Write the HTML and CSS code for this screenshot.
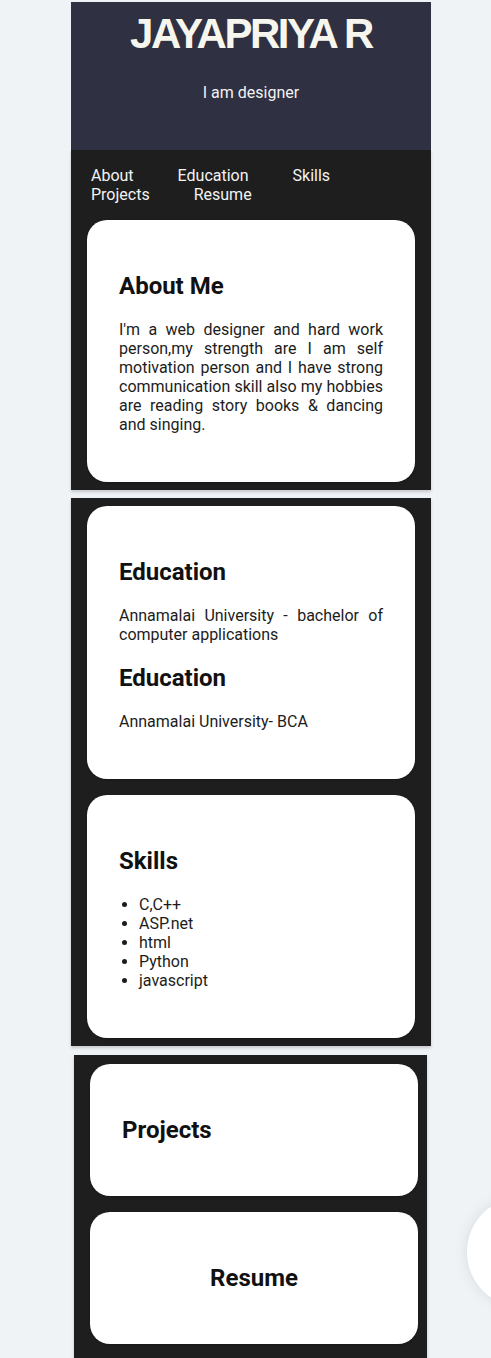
FILE: index.html
```html
<!DOCTYPE html>
<html lang="en">
<head>
<meta charset="utf-8">
<title>Jayapriya R</title>
<link rel="stylesheet" href="styles.css">
</head>
<body>
<div class="page">
  <header class="hero">
    <h1 class="hero-title">JAYAPRIYA R</h1>
    <p class="hero-sub">I am designer</p>
  </header>

  <section class="panel panel-first">
    <nav class="nav">
      <a href="#about">About</a>
      <a href="#education">Education</a>
      <a href="#skills">Skills</a>
      <a href="#projects">Projects</a>
      <a href="#resume">Resume</a>
    </nav>
    <article class="card" id="about">
      <h2 class="card-title">About Me</h2>
      <p class="card-text">I'm a web designer and hard work person,my strength are I am self motivation person and I have strong communication skill also my hobbies are reading story books &amp; dancing and singing.</p>
    </article>
  </section>

  <section class="panel">
    <article class="card" id="education">
      <h2 class="card-title">Education</h2>
      <p class="card-text">Annamalai University - bachelor of computer applications</p>
      <h2 class="card-title">Education</h2>
      <p class="card-text">Annamalai University- BCA</p>
    </article>
    <article class="card" id="skills">
      <h2 class="card-title">Skills</h2>
      <ul class="skill-list">
        <li>C,C++</li>
        <li>ASP.net</li>
        <li>html</li>
        <li>Python</li>
        <li>javascript</li>
      </ul>
    </article>
  </section>

  <section class="panel panel-last">
    <article class="card" id="projects">
      <h2 class="card-title">Projects</h2>
    </article>
    <article class="card card-center" id="resume">
      <h2 class="card-title">Resume</h2>
    </article>
  </section>
</div>
<div class="fab"></div>
</body>
</html>
```

FILE: styles.css
```css
html, body {
  margin: 0;
  padding: 0;
}

body {
  background: #f0f3f6;
  font-family: Roboto, "Noto Sans", Arial, sans-serif;
  color: #1a1a1a;
}

.page {
  width: 360px;
  margin: 2px 0 0 71px;
}

.hero {
  background: #2f3041;
  color: #f7f6ee;
  text-align: center;
  padding-top: 8px;
  height: 140px;
}

.hero-title {
  margin: 0;
  font-family: "Liberation Sans", Arial, sans-serif;
  font-weight: 700;
  font-size: 42px;
  line-height: 48px;
  letter-spacing: -2.5px;
}

.hero-sub {
  margin: 25px 0 0;
  font-size: 16px;
  line-height: 19px;
  color: #f2f2f2;
}

.panel {
  background: #1e1e1e;
  display: flex;
  flex-direction: column;
  gap: 16px;
  padding: 8px 16px;
  margin-top: 8px;
  box-shadow: 0 2px 3px rgba(0, 0, 0, 0.18);
}

.panel-first {
  margin-top: 0;
  padding-top: 16px;
}

.panel-last {
  width: 328px;
  margin-left: 3px;
  margin-top: 9px;
  padding: 9px 9px 20px 16px;
}

.nav {
  display: flex;
  flex-wrap: wrap;
  column-gap: 44px;
  padding: 0 4px;
  font-size: 16px;
  line-height: 19px;
}

.nav a {
  color: #f3f3f3;
  text-decoration: none;
}

.card {
  background: #ffffff;
  border-radius: 20px;
  padding: 32px;
  box-shadow: 0 1px 2px rgba(0, 0, 0, 0.25);
}

.card-center {
  text-align: center;
}

.card-title {
  font-size: 24px;
  font-weight: 700;
  line-height: 28px;
  margin: 20px 0;
  color: #111111;
}

.card-text {
  font-size: 16px;
  line-height: 19px;
  margin: 16px 0;
  text-align: justify;
  color: #1c1c1c;
}

.skill-list {
  margin: 16px 0;
  padding-left: 20px;
  font-size: 16px;
  line-height: 19px;
  color: #1c1c1c;
}

.fab {
  position: fixed;
  left: 467px;
  top: 1197px;
  width: 110px;
  height: 110px;
  border-radius: 50%;
  background: #ffffff;
  box-shadow: 0 0 14px rgba(0, 0, 0, 0.1);
}
```
